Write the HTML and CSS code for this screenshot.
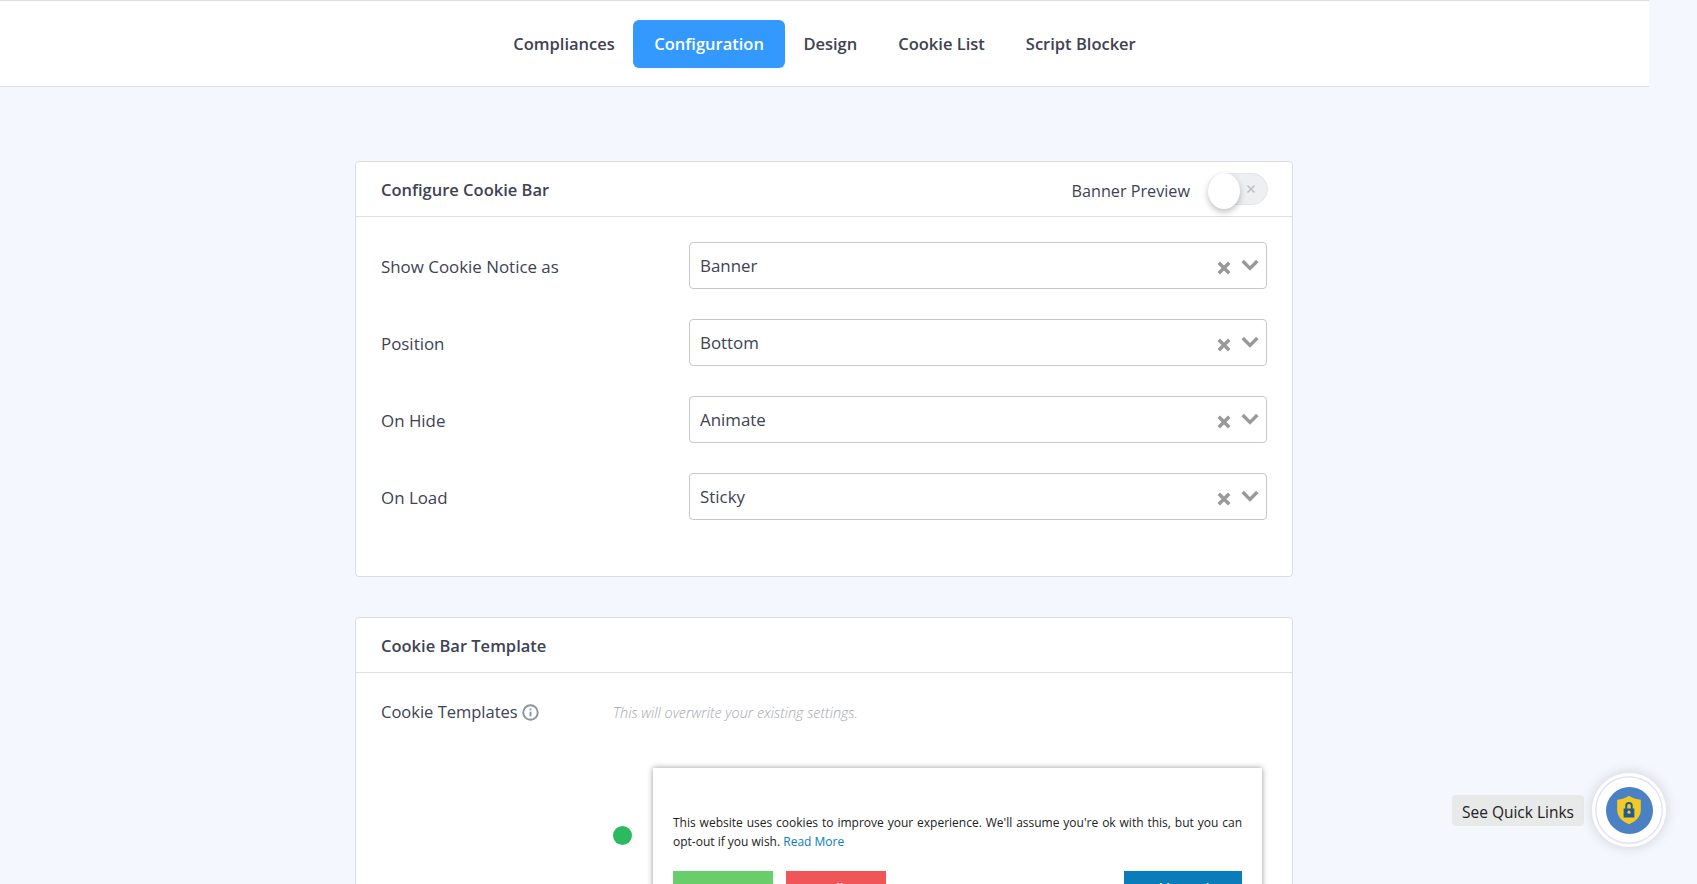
FILE: index.html
```html
<!DOCTYPE html>
<html lang="en">
<head>
  <meta charset="UTF-8" />
  <title>Cookie Consent Configuration</title>
  <link rel="stylesheet" href="styles.css">
</head>
<body>

  <div class="page">
    <nav class="top-nav">
      <a class="nav-link" href="#">Compliances</a>
      <a class="nav-link active" href="#">Configuration</a>
      <a class="nav-link" href="#">Design</a>
      <a class="nav-link" href="#">Cookie List</a>
      <a class="nav-link" href="#">Script Blocker</a>
    </nav>

    <div class="content">
      <section class="card">
        <div class="card-header">
          <h2>Configure Cookie Bar</h2>
          <div class="preview">
            <span>Banner Preview</span>
            <div class="toggle">
              <span class="toggle-knob"></span>
              <svg class="toggle-x" viewBox="0 0 10 10"><path d="M1.5 1.5l7 7M8.5 1.5l-7 7"/></svg>
            </div>
          </div>
        </div>
        <div class="card-body config-body">
          <div class="form-row">
            <label>Show Cookie Notice as</label>
            <div class="select">
              <span class="select-value">Banner</span>
              <svg class="select-clear" viewBox="0 0 12 12"><path d="M1.5 1.5l9 9M10.5 1.5l-9 9"/></svg>
              <svg class="select-arrow" viewBox="0 0 16 10"><path d="M1.5 1.5L8 8l6.5-6.5"/></svg>
            </div>
          </div>
          <div class="form-row">
            <label>Position</label>
            <div class="select">
              <span class="select-value">Bottom</span>
              <svg class="select-clear" viewBox="0 0 12 12"><path d="M1.5 1.5l9 9M10.5 1.5l-9 9"/></svg>
              <svg class="select-arrow" viewBox="0 0 16 10"><path d="M1.5 1.5L8 8l6.5-6.5"/></svg>
            </div>
          </div>
          <div class="form-row">
            <label>On Hide</label>
            <div class="select">
              <span class="select-value">Animate</span>
              <svg class="select-clear" viewBox="0 0 12 12"><path d="M1.5 1.5l9 9M10.5 1.5l-9 9"/></svg>
              <svg class="select-arrow" viewBox="0 0 16 10"><path d="M1.5 1.5L8 8l6.5-6.5"/></svg>
            </div>
          </div>
          <div class="form-row">
            <label>On Load</label>
            <div class="select">
              <span class="select-value">Sticky</span>
              <svg class="select-clear" viewBox="0 0 12 12"><path d="M1.5 1.5l9 9M10.5 1.5l-9 9"/></svg>
              <svg class="select-arrow" viewBox="0 0 16 10"><path d="M1.5 1.5L8 8l6.5-6.5"/></svg>
            </div>
          </div>
        </div>
      </section>

      <section class="card">
        <div class="card-header">
          <h2>Cookie Bar Template</h2>
        </div>
        <div class="card-body template-body">
          <div class="template-head">
            <div class="template-label">
              Cookie Templates
              <svg class="info-icon" viewBox="0 0 16 16">
                <circle cx="8" cy="8" r="6.8"/>
                <path d="M8 7.2v4.3M8 4.3v1.5"/>
              </svg>
            </div>
            <em class="template-hint">This will overwrite your existing settings.</em>
          </div>
          <div class="template-option">
            <span class="radio-dot"></span>
            <div class="template-preview">
              <p>This website uses cookies to improve your experience. We'll assume you're ok with this, but you can opt-out if you wish. <a href="#">Read More</a></p>
              <div class="template-buttons">
                <span class="tpl-btn accept">Accept</span>
                <span class="tpl-btn decline">Decline</span>
                <span class="tpl-btn settings">Cookie Settings</span>
              </div>
            </div>
          </div>
        </div>
      </section>
    </div>
  </div>

  <!-- floating quick links -->
  <div class="quick-links">
    <span class="quick-label">See Quick Links</span>
    <div class="quick-button">
      <div class="quick-inner">
        <svg viewBox="0 0 24 28">
          <path class="shield" d="M12 .8c3 2.2 6.800 3.4 11 3.700v9.500c0 6-4.400 10.700-11 13.300C5.400 24.700 1 20 1 14V4.500C5.200 4.200 9 3 12 .8z"/>
          <path class="lock" d="M7 12.500h1.500V10a3.500 3.500 0 017 0v2.500H17v8.500H7zM10.300 12.500h3.400V10a1.700 1.700 0 00-3.400 0z"/>
          <circle class="keyhole" cx="12" cy="16" r="1.5"/>
        </svg>
      </div>
    </div>
  </div>

</body>
</html>
```

FILE: styles.css
```css
html, body {
  height: 100%;
  overflow: hidden;
}

body {
  margin: 0;
  background: #f4f7fe;
  color: #3e4254;
  font-family: "Open Sans", "Noto Sans", sans-serif;
}

.page {
  width: 1649px;
}

.top-nav {
  display: flex;
  justify-content: center;
  align-items: center;
  height: 85px;
  background: #fff;
  border-top: 1px solid #dcdcdc;
  border-bottom: 1px solid #dcdfe3;
}

.nav-link {
  padding: 0 20.5px;
  height: 48px;
  line-height: 48px;
  font-size: 16.5px;
  font-weight: 600;
  color: #3e4254;
  text-decoration: none;
  border-radius: 6px;
}

.nav-link.active {
  background: #3399ff;
  color: #fff;
  padding: 0 21.5px;
  margin: 0 -2.5px;
}

.content {
  width: 938px;
  margin: 74px 0 0 355px;
}

.card {
  background: #fff;
  border: 1px solid #d9dde3;
  border-radius: 4px;
  margin-bottom: 40px;
}

.card-header {
  display: flex;
  justify-content: space-between;
  align-items: center;
  height: 54px;
  padding: 0 24px 0 25px;
  border-bottom: 1px solid #dcdfe3;
}

.card-header h2 {
  margin: 0;
  font-size: 16.5px;
  font-weight: 600;
  color: #3e4254;
}

.preview {
  display: flex;
  align-items: center;
  gap: 18px;
  font-size: 16.2px;
}

.preview span:first-child {
  padding-top: 4px;
}

.toggle {
  position: relative;
  width: 60px;
  height: 32px;
  background: #edeff1;
  border: 1px solid #e3e5e8;
  border-radius: 16px;
  box-sizing: border-box;
}

.toggle-knob {
  position: absolute;
  left: -1px;
  top: -1px;
  width: 32px;
  height: 32px;
  border-radius: 50%;
  background: #fff;
  box-shadow: 0 3px 6px rgba(0, 0, 0, 0.25);
}

.toggle-x {
  position: absolute;
  right: 11px;
  top: 10px;
  width: 10px;
  height: 10px;
  fill: none;
  stroke: #b9bec4;
  stroke-width: 1.5;
}

.config-body {
  padding: 25px 24px 56px 25px;
}

.form-row {
  display: flex;
  align-items: center;
  margin-bottom: 30px;
}

.form-row:last-child {
  margin-bottom: 0;
}

.form-row label {
  width: 308px;
  font-size: 16.9px;
  padding-top: 2px;
}

.select {
  display: flex;
  align-items: center;
  width: 578px;
  height: 47px;
  box-sizing: border-box;
  padding: 0 7px 0 10px;
  background: #fff;
  border: 1px solid #c8c8c8;
  border-radius: 4px;
}

.select-value {
  flex: 1;
  font-size: 16.9px;
}

.select-clear {
  width: 14px;
  height: 14px;
  margin: 4px 10px 0 0;
  fill: none;
  stroke: #999;
  stroke-width: 3;
}

.select-arrow {
  width: 18px;
  height: 12px;
  margin-top: -2px;
  fill: none;
  stroke: #999;
  stroke-width: 3;
}

.template-body {
  padding: 27px 25px 0;
}

.template-head {
  display: flex;
  align-items: center;
}

.template-label {
  display: flex;
  align-items: center;
  gap: 4px;
  width: 232px;
  font-size: 16.5px;
}

.info-icon {
  width: 17px;
  height: 17px;
  margin-top: 2px;
  fill: none;
  stroke: #8d929b;
  stroke-width: 1.8;
}

.template-hint {
  margin-top: 2px;
  font-size: 14.4px;
  font-weight: 300;
  color: #a3a6ad;
}

.template-option {
  display: flex;
  align-items: flex-start;
  margin: 45px 0 0 232px;
}

.radio-dot {
  width: 19px;
  height: 19px;
  margin: 58px 21px 0 0;
  border-radius: 50%;
  background: #2dba5e;
  flex-shrink: 0;
}

.template-preview {
  width: 569px;
  padding: 45px 20px 30px;
  background: #fff;
  box-shadow: 0 0 6px rgba(0, 0, 0, 0.4);
}

.template-preview p {
  margin: 0 0 20px;
  font-size: 12px;
  line-height: 19px;
  text-align: justify;
  color: #212121;
}

.template-preview a {
  color: #0a7cba;
  text-decoration: none;
}

.template-buttons {
  display: flex;
  gap: 13px;
}

.tpl-btn {
  width: 100px;
  padding: 8px 0;
  font-size: 13px;
  font-weight: 600;
  text-align: center;
  color: #fff;
}

.tpl-btn.accept {
  background: #69cd6a;
}

.tpl-btn.decline {
  background: #f05658;
}

.tpl-btn.settings {
  width: 118px;
  margin-left: auto;
  background: #0a7cba;
}

.quick-links {
  position: fixed;
  right: 31px;
  bottom: 37px;
  display: flex;
  align-items: center;
  gap: 8px;
}

.quick-label {
  padding: 0 10px;
  height: 31px;
  line-height: 35px;
  font-size: 15.5px;
  color: #222;
  background: #e8e9e9;
  border-radius: 4px;
}

.quick-button {
  display: flex;
  align-items: center;
  justify-content: center;
  width: 74px;
  height: 74px;
  box-sizing: border-box;
  background: #fff;
  border-radius: 50%;
  box-shadow: inset 0 0 0 3px #fff, inset 0 0 0 4.5px #e4e3f2, 0 0 14px rgba(0, 0, 0, 0.16);
}

.quick-inner {
  display: flex;
  align-items: center;
  justify-content: center;
  width: 47px;
  height: 47px;
  border-radius: 50%;
  background: #4a80c4;
}

.quick-inner svg {
  width: 26px;
  height: 30px;
}

.shield {
  fill: #f4c923;
}

.lock {
  fill: #1f5c97;
  fill-rule: evenodd;
}

.keyhole {
  fill: #f4c923;
}
```
